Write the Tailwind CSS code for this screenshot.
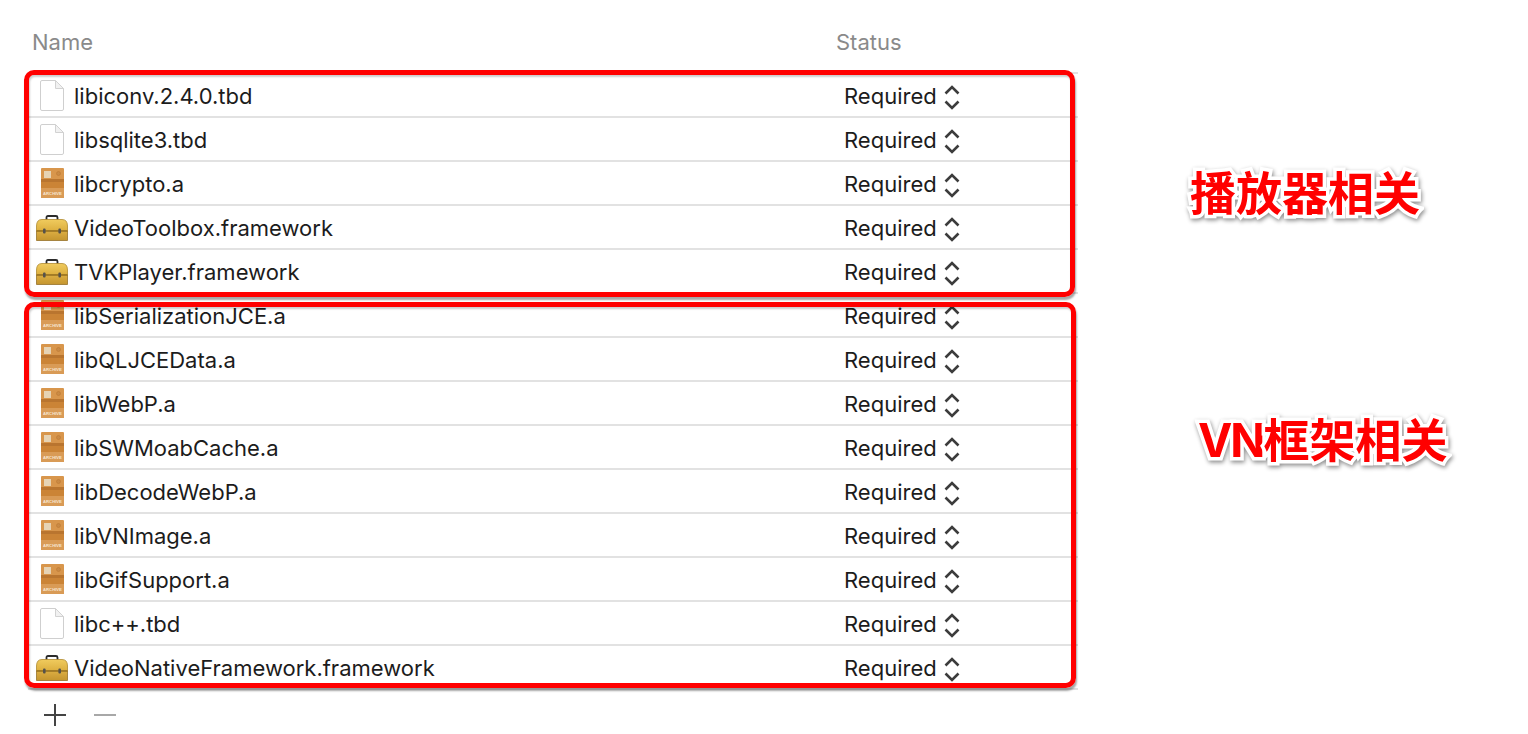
<!DOCTYPE html>
<html>
<head>
    <title>Linked Frameworks and Libraries</title>
    <script src="https://cdn.jsdelivr.net/npm/@tailwindcss/browser@4"></script>
</head>
<body class="bg-white h-[734px] overflow-hidden relative font-['Inter','Noto_Sans_CJK_SC',sans-serif]">
    <svg class="absolute w-0 h-0">
        <defs>
            <linearGradient id="box-top" x1="0" y1="0" x2="0" y2="1">
                <stop offset="0" stop-color="#f0cb5e"/>
                <stop offset="1" stop-color="#dcae3e"/>
            </linearGradient>
            <linearGradient id="box-bottom" x1="0" y1="0" x2="0" y2="1">
                <stop offset="0" stop-color="#dcae42"/>
                <stop offset="1" stop-color="#c4952f"/>
            </linearGradient>
        </defs>
        <symbol id="icon-file" viewBox="0 0 24 31">
            <path d="M0.5 2Q0.5 0.5 2 0.5H15.5L23.5 8.5V29Q23.5 30.5 22 30.5H2Q0.5 30.5 0.5 29Z" fill="#fff" stroke="#cfcfcf"/>
            <path d="M15.5 0.5V8.5H23.5Z" fill="#f1f1f1" stroke="#d2d2d2"/>
        </symbol>
        <symbol id="icon-archive" viewBox="0 0 23 30">
            <rect width="23" height="30" rx="1" fill="#d8964c"/>
            <rect y="11" width="23" height="3" fill="#b9752f"/>
            <rect y="14" width="23" height="6" fill="#cb8436"/>
            <rect y="20" width="23" height="10" fill="#d99b56"/>
            <rect x="3" y="3" width="7" height="7" fill="#e6d3b4"/>
            <circle cx="17.500" cy="5.500" r="2" fill="#c98a45" stroke="#b9752f" stroke-width="0.500"/>
        </symbol>
        <symbol id="icon-toolbox" viewBox="0 0 32 26">
            <path d="M10.500 6V2.500Q10.500 1 12 1H20Q21.500 1 21.500 2.500V6" fill="none" stroke="#2b2b2b" stroke-width="1.800"/>
            <path d="M0.500 11Q0.500 4.500 6 4.500H26Q31.500 4.500 31.500 11V16H0.500Z" fill="url(#box-top)" stroke="#b08a30" stroke-width="0.800"/>
            <path d="M0.500 16H31.500V25.500H0.500Z" fill="url(#box-bottom)" stroke="#97722a" stroke-width="0.800"/>
            <rect x="0.500" y="15.400" width="31" height="1.200" fill="#96701f"/>
            <rect x="7" y="13.500" width="2.600" height="5" rx="1" fill="#55524c"/>
            <rect x="22.400" y="13.500" width="2.600" height="5" rx="1" fill="#55524c"/>
        </symbol>
        <symbol id="icon-updown" viewBox="0 0 16 25">
            <path d="M1.500 8.500L8 2L14.500 8.500M1.500 16.500L8 23L14.500 16.500" fill="none" stroke="#3c3c3c" stroke-width="2.600"/>
        </symbol>
    </svg>

    <div class="pt-[29px]">
        <div class="flex h-[26px] items-center text-[22px] text-[#8a8a8a]">
            <span class="ml-[32px] w-[804px]">Name</span>
            <span>Status</span>
        </div>
        <div class="ml-[28px] w-[1050px] mt-[17px] border-t-2 border-[#e2e2e2]">
            <div id="rows"></div>
        </div>
        <div class="flex items-center h-[24px] mt-[13px] ml-[44px] gap-[28px]">
            <svg width="22" height="22" viewBox="0 0 22 22"><path d="M0 11H22M11 0V22" stroke="#444" stroke-width="2"/></svg>
            <svg width="22" height="22" viewBox="0 0 22 22"><path d="M0 11H22" stroke="#a8a8a8" stroke-width="2"/></svg>
        </div>
    </div>

    <div class="absolute left-[24px] top-[70px] w-[1051px] h-[227px] border-[5px] border-[#ff0000] rounded-[10px] shadow-[1px_3px_2px_rgba(0,0,0,0.35),inset_1px_2px_2px_rgba(0,0,0,0.2)]"></div>
    <div class="absolute left-[24px] top-[302px] w-[1052px] h-[386px] border-[5px] border-[#ff0000] rounded-[10px] shadow-[1px_3px_2px_rgba(0,0,0,0.35),inset_1px_2px_2px_rgba(0,0,0,0.2)]"></div>

    <div class="absolute left-[1190px] top-[161px] text-[46px] leading-[64px] font-bold text-[#ff0000] whitespace-nowrap [-webkit-text-stroke:7px_white] [paint-order:stroke_fill] drop-shadow-[1px_2px_2px_rgba(0,0,0,0.45)]">播放器相关</div>
    <div class="absolute left-[1198px] top-[408px] text-[46px] leading-[64px] font-bold text-[#ff0000] whitespace-nowrap [-webkit-text-stroke:7px_white] [paint-order:stroke_fill] drop-shadow-[1px_2px_2px_rgba(0,0,0,0.45)]"><span class="tracking-[-2px]">VN</span>框架相关</div>

    <script>
        const items = [
            ['file', 'libiconv.2.4.0.tbd'],
            ['file', 'libsqlite3.tbd'],
            ['archive', 'libcrypto.a'],
            ['toolbox', 'VideoToolbox.framework'],
            ['toolbox', 'TVKPlayer.framework'],
            ['archive', 'libSerializationJCE.a'],
            ['archive', 'libQLJCEData.a'],
            ['archive', 'libWebP.a'],
            ['archive', 'libSWMoabCache.a'],
            ['archive', 'libDecodeWebP.a'],
            ['archive', 'libVNImage.a'],
            ['archive', 'libGifSupport.a'],
            ['file', 'libc++.tbd'],
            ['toolbox', 'VideoNativeFramework.framework']
        ];

        const icons = {
            file: '<svg width="24" height="31"><use href="#icon-file"/></svg>',
            archive: '<svg width="23" height="30"><use href="#icon-archive"/><text x="11.500" y="27" text-anchor="middle" font-family="Liberation Sans, sans-serif" font-size="4.200" font-weight="700" fill="#f7e6d2">ARCHIVE</text></svg>',
            toolbox: '<svg width="32" height="26" class="mt-[1px]"><use href="#icon-toolbox"/></svg>'
        };

        let rowsHtml = '';
        items.forEach(item => {
            rowsHtml += `
                <div class="flex items-center h-[44px] border-b-2 border-[#e2e2e2] text-[22px] text-[#1c1c1c]">
                    <div class="ml-[6px] mr-[4px] w-[36px] flex justify-center shrink-0">${icons[item[0]]}</div>
                    <span class="w-[770px] shrink-0 pt-[3px]">${item[1]}</span>
                    <span class="w-[100px] shrink-0 pt-[3px]">Required</span>
                    <svg width="16" height="25" class="mt-[5px]"><use href="#icon-updown"/></svg>
                </div>`;
        });
        document.getElementById('rows').innerHTML = rowsHtml;
    </script>
</body>
</html>
